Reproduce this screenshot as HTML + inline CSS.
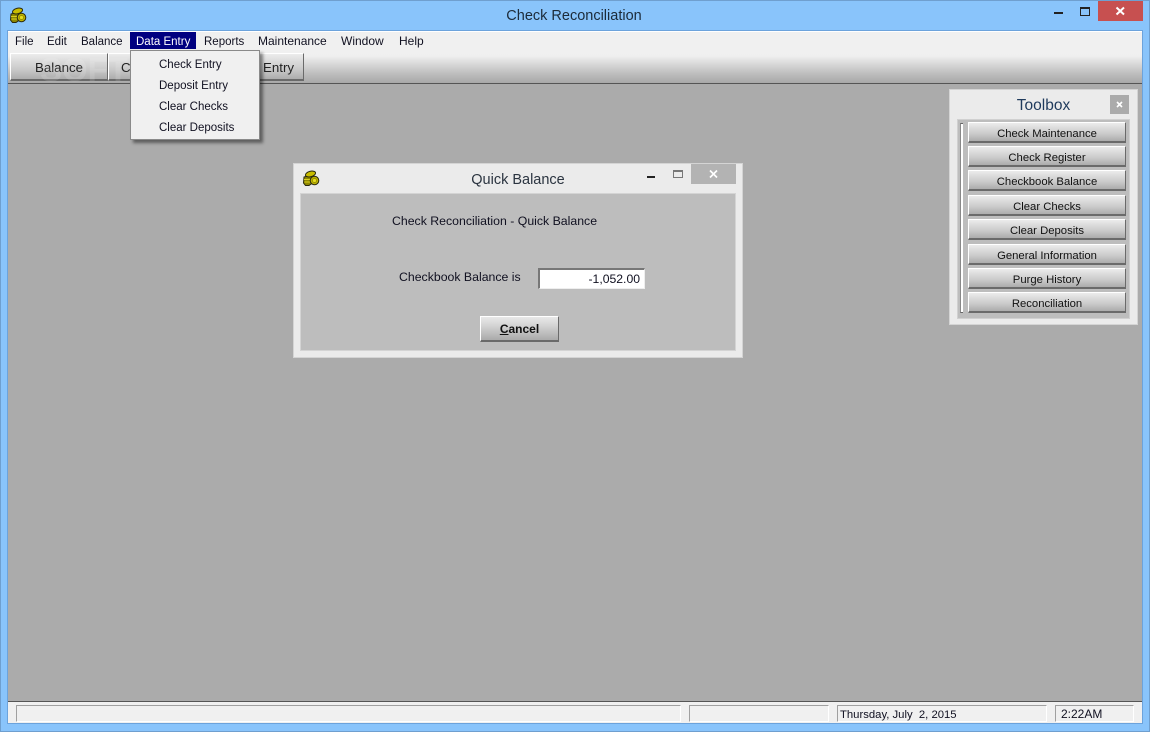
<!DOCTYPE html>
<html><head><meta charset="utf-8"><style>
html,body{margin:0;padding:0}
body{width:1150px;height:732px;overflow:hidden;position:relative;background:#89c4fb;font-family:"Liberation Sans",sans-serif;color:#111}
div,span.t{position:absolute;box-sizing:border-box}
.t{white-space:nowrap;font-size:12px;line-height:14px;color:#101020}
.m{font-size:11.5px;margin-top:1px}
.c{text-align:center}
.btn{background:linear-gradient(#ececec 0%,#e0e0e0 20%,#cacaca 60%,#acacac 100%);border-top:1px solid #fff;border-left:1px solid #fff;border-right:1px solid #6a6a6a;border-bottom:2px solid #6a6a6a}
.tb{left:968px;width:158px;height:21px;text-align:center;font-size:11.3px;line-height:22px;color:#111}
.sp{top:705px;height:17px;border-top:1px solid #a0a0a0;border-left:1px solid #a0a0a0;border-right:1px solid #fff;border-bottom:1px solid #fff}
svg{position:absolute}
</style></head><body>
<div style="left:0;top:0;width:1150px;height:732px;border:1px solid #6f9fcf"></div>
<svg style="left:9px;top:7px" width="18" height="17" viewBox="0 0 18 17"><path d="M2 7L10 5L12 12L7 15.500H3.500L1.500 13Z" fill="#8f8700" stroke="#2a2a10"/><ellipse cx="8.500" cy="4" rx="5.200" ry="2.700" transform="rotate(-15 8.500 4)" fill="#c9bd00" stroke="#2a2a10"/><path d="M2 9.500H9M2.500 12H9" stroke="#d8d020" stroke-width="1"/><circle cx="12.500" cy="10.500" r="4.300" fill="#bdb200" stroke="#2a2a10"/><circle cx="12.500" cy="10.500" r="2" fill="#e6de20" stroke="#8a8000" stroke-width=".7"/></svg>
<span class="t c" style="left:399px;width:350px;top:7px;font-size:14.500px;line-height:18px;color:#1c2b3a">Check Reconciliation</span>
<div style="left:1054px;top:12px;width:9px;height:2px;background:#222"></div>
<div style="left:1080px;top:7px;width:10px;height:9px;border:1px solid #222;border-top-width:2px"></div>
<div style="left:1098px;top:1px;width:45px;height:20px;background:#c75050"></div>
<svg style="left:1115px;top:6px" width="11" height="10" viewBox="0 0 11 10"><path d="M1.500 1.500L9 8.500M9 1.500L1.500 8.500" stroke="#fff" stroke-width="2"/></svg>

<div style="left:7px;top:30px;width:1136px;height:694px;border:1px solid #6ca3dc;background:#f0f0f0"></div>
<div style="left:8px;top:31px;width:1134px;height:1px;background:#fff"></div>

<span class="t m" style="left:15px;top:34px">File</span>
<span class="t m" style="left:47px;top:34px">Edit</span>
<span class="t m" style="left:81px;top:34px">Balance</span>
<div style="left:130px;top:32px;width:66px;height:17px;background:#000080"></div>
<span class="t m" style="left:136px;top:34px;color:#fff">Data Entry</span>
<span class="t m" style="left:204px;top:34px">Reports</span>
<span class="t" style="left:258px;top:34px">Maintenance</span>
<span class="t" style="left:341px;top:34px">Window</span>
<span class="t" style="left:399px;top:34px">Help</span>

<div style="left:8px;top:54px;width:1134px;height:29px;background:linear-gradient(#f0f0f0 0%,#eeeeee 8%,#d8d8d8 35%,#bcbcbc 70%,#a8a8a8 100%)"></div>
<div style="left:8px;top:83px;width:1134px;height:1px;background:#555"></div>
<div style="left:8px;top:84px;width:1134px;height:617px;background:#ababab"></div>

<div class="btn" style="left:10px;top:53px;width:98px;height:28px"></div>
<span class="t c" style="left:10px;width:98px;top:60px;font-size:13.3px;line-height:16px;color:#222">Balance</span>
<div class="btn" style="left:108px;top:53px;width:196px;height:28px"></div>
<span class="t" style="left:121px;top:60px;font-size:13.3px;line-height:16px;color:#222">C</span>
<span class="t" style="left:263px;top:60px;font-size:13.3px;line-height:16px;color:#222">Entry</span>
<span class="t" style="left:40px;top:53px;font-size:33px;line-height:33px;font-weight:bold;color:rgba(255,255,255,.13)">SOFTPEDIA</span>

<div style="left:130px;top:50px;width:130px;height:90px;background:#f0f0f0;border:1px solid #8a8a8a;box-shadow:3px 3px 3px rgba(0,0,0,.45)"></div>
<span class="t m" style="left:159px;top:57px">Check Entry</span>
<span class="t m" style="left:159px;top:78px">Deposit Entry</span>
<span class="t m" style="left:159px;top:99px">Clear Checks</span>
<span class="t m" style="left:159px;top:120px">Clear Deposits</span>

<div style="left:293px;top:163px;width:450px;height:195px;background:#ebebeb;border:1px solid #d4d4d4"></div>
<svg style="left:302px;top:170px" width="18" height="17" viewBox="0 0 18 17"><path d="M2 7L10 5L12 12L7 15.500H3.500L1.500 13Z" fill="#8f8700" stroke="#2a2a10"/><ellipse cx="8.500" cy="4" rx="5.200" ry="2.700" transform="rotate(-15 8.500 4)" fill="#c9bd00" stroke="#2a2a10"/><path d="M2 9.500H9M2.500 12H9" stroke="#d8d020" stroke-width="1"/><circle cx="12.500" cy="10.500" r="4.300" fill="#bdb200" stroke="#2a2a10"/><circle cx="12.500" cy="10.500" r="2" fill="#e6de20" stroke="#8a8000" stroke-width=".7"/></svg>
<span class="t c" style="left:368px;width:300px;top:171px;font-size:14.500px;line-height:18px;color:#2b3440">Quick Balance</span>
<div style="left:647px;top:176px;width:8px;height:2px;background:#222"></div>
<div style="left:673px;top:170px;width:10px;height:8px;border:1px solid #777;border-top-width:2px"></div>
<div style="left:691px;top:164px;width:45px;height:20px;background:#b3b3b3"></div>
<svg style="left:708px;top:169px" width="11" height="10" viewBox="0 0 11 10"><path d="M2 1.500L9 8.500M9 1.500L2 8.500" stroke="#fff" stroke-width="1.700"/></svg>
<div style="left:300px;top:193px;width:436px;height:158px;background:#bdbdbd;border:1px solid #d4d4d4"></div>
<span class="t" style="left:392px;top:214px;font-size:12.3px">Check Reconciliation - Quick Balance</span>
<span class="t" style="left:399px;top:270px;font-size:12.3px">Checkbook Balance is</span>
<div style="left:538px;top:268px;width:107px;height:21px;background:#fff;border-top:2px solid #777;border-left:2px solid #777;border-right:1px solid #eee;border-bottom:1px solid #eee"></div>
<span class="t" style="left:540px;width:100px;top:272px;text-align:right;font-size:12.2px">-1,052.00</span>
<div class="btn" style="left:480px;top:316px;width:79px;height:26px;background:linear-gradient(#e8e8e8,#d8d8d8 30%,#aaa)"></div>
<span class="t c" style="left:480px;width:79px;top:322px;font-weight:bold;font-size:12px;color:#111"><u>C</u>ancel</span>

<div style="left:949px;top:89px;width:189px;height:236px;background:#ebebeb;border:1px solid #d4d4d4"></div>
<span class="t c" style="left:950px;width:187px;top:97px;font-size:15.500px;line-height:18px;color:#1f3a5c">Toolbox</span>
<div style="left:1110px;top:95px;width:19px;height:19px;background:#ababab"></div>
<svg style="left:1116px;top:101px" width="7" height="7" viewBox="0 0 7 7"><path d="M1 1L6 6M6 1L1 6" stroke="#fff" stroke-width="1.600"/></svg>
<div style="left:957px;top:119px;width:173px;height:200px;background:#bdbdbd;border:1px solid #d0d0d0"></div>
<div style="left:960px;top:123px;width:3px;height:190px;background:#fff;border-top:1px solid #666;border-left:1px solid #888;border-bottom:1px solid #666"></div>
<div class="btn tb" style="top:122px">Check Maintenance</div>
<div class="btn tb" style="top:146px">Check Register</div>
<div class="btn tb" style="top:170px">Checkbook Balance</div>
<div class="btn tb" style="top:195px">Clear Checks</div>
<div class="btn tb" style="top:219px">Clear Deposits</div>
<div class="btn tb" style="top:244px">General Information</div>
<div class="btn tb" style="top:268px">Purge History</div>
<div class="btn tb" style="top:292px">Reconciliation</div>

<div style="left:8px;top:701px;width:1134px;height:1px;background:#555"></div>
<div class="sp" style="left:16px;width:665px"></div>
<div class="sp" style="left:689px;width:140px"></div>
<div class="sp" style="left:837px;width:210px"></div>
<div class="sp" style="left:1055px;width:79px"></div>
<span class="t" style="left:840px;top:708px;white-space:pre;font-size:11.3px">Thursday, July  2, 2015</span>
<span class="t" style="left:1061px;top:707px">2:22AM</span>
</body></html>
